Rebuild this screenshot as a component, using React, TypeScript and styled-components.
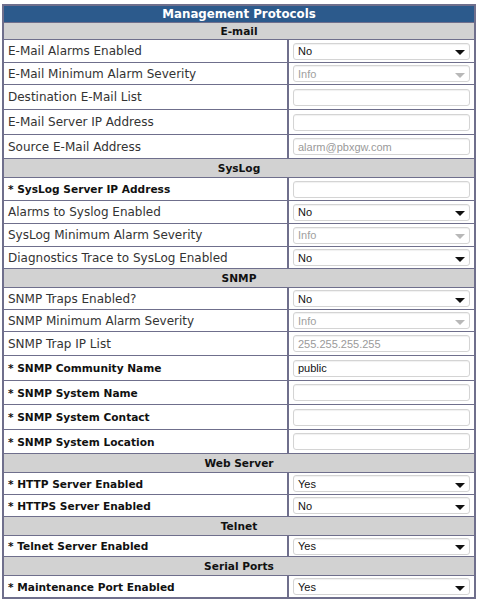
import React from 'react'
import styled, { createGlobalStyle } from 'styled-components'

const GlobalStyle = createGlobalStyle`
  body {
    margin: 0;
    background: #ffffff;
    font-family: "DejaVu Sans", Verdana, sans-serif;
  }
`

const Page = styled.div`
  padding: 4px 3px 0 2px;
`

const Table = styled.table`
  width: 474px;
  border-collapse: collapse;
  border: 2px solid #6f6f8c;
  font-size: 12px;
  color: #222;
`

const Title = styled.th`
  background: #2c5a8c;
  color: #ffffff;
  font-weight: bold;
  font-size: 11.8px;
  height: 16px;
  padding: 0;
  text-align: center;
  border-bottom: 1px solid #6f6f8c;
`

const Section = styled.th<{ $h?: number }>`
  background: #d2d2d2;
  color: #111;
  font-weight: bold;
  font-size: 10.6px;
  height: ${p => p.$h || 18}px;
  padding: 0;
  text-align: center;
  border: 1px solid #6f6f8c;
`

const Label = styled.td<{ $req?: boolean; $h: number }>`
  width: 279px;
  padding: 0 0 0 4px;
  height: ${p => p.$h}px;
  font-weight: ${p => (p.$req ? 'bold' : 'normal')};
  font-size: ${p => (p.$req ? '10.6px' : '12px')};
  color: ${p => (p.$req ? '#111' : '#333')};
  border: 1px solid #6f6f8c;
  border-right: 2px solid #6f6f8c;
  white-space: nowrap;
`

const Cell = styled.td`
  padding: 0 4px 0 4px;
  border: 1px solid #6f6f8c;
`

const Box = styled.div<{ $disabled?: boolean }>`
  height: 17px;
  box-sizing: border-box;
  border: 1px solid #d4d4d4;
  border-radius: 3px;
  box-shadow: inset 0 1px 1px rgba(0, 0, 0, 0.06);
  background: #fff;
  display: flex;
  align-items: center;
  justify-content: space-between;
  padding: 0 4px;
  font-family: "Liberation Sans", Arial, sans-serif;
  font-size: 11px;
  color: ${p => (p.$disabled ? '#a0a0a0' : '#111')};
`

const Hint = styled.span`
  color: #9a9a9a;
`

const Arrow = styled.span<{ $disabled?: boolean }>`
  width: 0;
  height: 0;
  margin-top: 3px;
  border-left: 5px solid transparent;
  border-right: 5px solid transparent;
  border-top: 5px solid ${p => (p.$disabled ? '#b8b8b8' : '#111')};
`

type Row =
  | { kind: 'section'; title: string; h?: number }
  | { kind: 'select'; label: string; value: string; req?: boolean; disabled?: boolean; h: number }
  | { kind: 'input'; label: string; value?: string; hint?: boolean; req?: boolean; h: number }

const rows: Row[] = [
  { kind: 'section', title: 'E-mail', h: 16 },
  { kind: 'select', label: 'E-Mail Alarms Enabled', value: 'No', h: 22 },
  { kind: 'select', label: 'E-Mail Minimum Alarm Severity', value: 'Info', disabled: true, h: 21 },
  { kind: 'input', label: 'Destination E-Mail List', h: 24 },
  { kind: 'input', label: 'E-Mail Server IP Address', h: 24 },
  { kind: 'input', label: 'Source E-Mail Address', value: 'alarm@pbxgw.com', hint: true, h: 23 },
  { kind: 'section', title: 'SysLog' },
  { kind: 'input', label: '* SysLog Server IP Address', req: true, h: 22 },
  { kind: 'select', label: 'Alarms to Syslog Enabled', value: 'No', h: 22 },
  { kind: 'select', label: 'SysLog Minimum Alarm Severity', value: 'Info', disabled: true, h: 22 },
  { kind: 'select', label: 'Diagnostics Trace to SysLog Enabled', value: 'No', h: 21 },
  { kind: 'section', title: 'SNMP' },
  { kind: 'select', label: 'SNMP Traps Enabled?', value: 'No', h: 21 },
  { kind: 'select', label: 'SNMP Minimum Alarm Severity', value: 'Info', disabled: true, h: 21 },
  { kind: 'input', label: 'SNMP Trap IP List', value: '255.255.255.255', hint: true, h: 23 },
  { kind: 'input', label: '* SNMP Community Name', value: 'public', req: true, h: 24 },
  { kind: 'input', label: '* SNMP System Name', req: true, h: 23 },
  { kind: 'input', label: '* SNMP System Contact', req: true, h: 24 },
  { kind: 'input', label: '* SNMP System Location', req: true, h: 23 },
  { kind: 'section', title: 'Web Server' },
  { kind: 'select', label: '* HTTP Server Enabled', value: 'Yes', req: true, h: 21 },
  { kind: 'select', label: '* HTTPS Server Enabled', value: 'No', req: true, h: 21 },
  { kind: 'section', title: 'Telnet' },
  { kind: 'select', label: '* Telnet Server Enabled', value: 'Yes', req: true, h: 20 },
  { kind: 'section', title: 'Serial Ports' },
  { kind: 'select', label: '* Maintenance Port Enabled', value: 'Yes', req: true, h: 21 },
]

export default function App() {
  return (
    <Page>
      <GlobalStyle />
      <Table>
        <tbody>
          <tr>
            <Title colSpan={2}>Management Protocols</Title>
          </tr>
          {rows.map((r, i) => {
            if (r.kind === 'section') {
              return (
                <tr key={i}>
                  <Section colSpan={2} $h={r.h}>{r.title}</Section>
                </tr>
              )
            }
            if (r.kind === 'select') {
              return (
                <tr key={i}>
                  <Label $req={r.req} $h={r.h}>{r.label}</Label>
                  <Cell>
                    <Box $disabled={r.disabled}>
                      <span>{r.value}</span>
                      <Arrow $disabled={r.disabled} />
                    </Box>
                  </Cell>
                </tr>
              )
            }
            return (
              <tr key={i}>
                <Label $req={r.req} $h={r.h}>{r.label}</Label>
                <Cell>
                  <Box>{r.value ? (r.hint ? <Hint>{r.value}</Hint> : <span>{r.value}</span>) : null}</Box>
                </Cell>
              </tr>
            )
          })}
        </tbody>
      </Table>
    </Page>
  )
}
